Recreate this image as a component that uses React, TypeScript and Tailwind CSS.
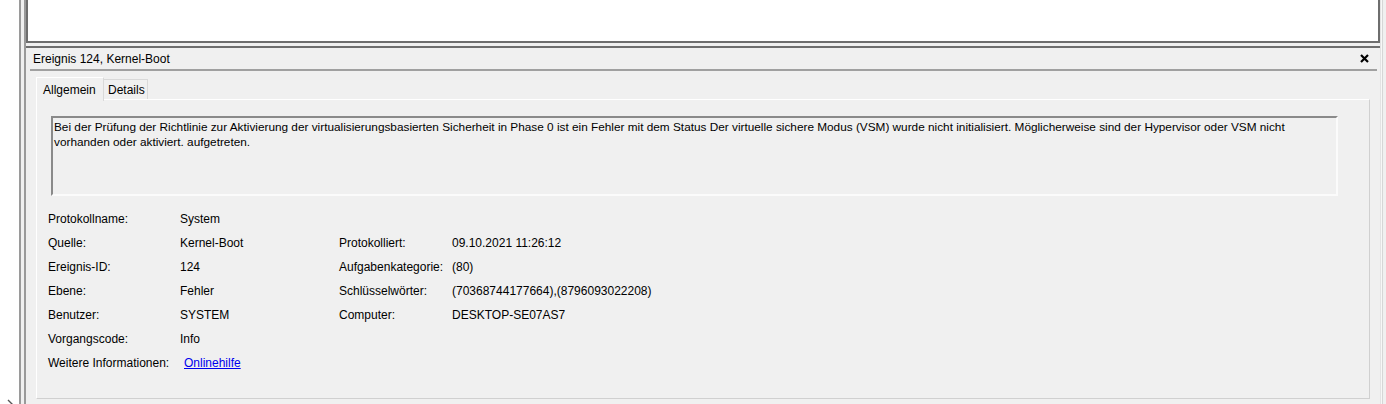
export default function App() {
  const rows: [string, React.ReactNode, string?, string?][] = [
    ["Protokollname:", "System"],
    ["Quelle:", "Kernel-Boot", "Protokolliert:", "09.10.2021 11:26:12"],
    ["Ereignis-ID:", "124", "Aufgabenkategorie:", "(80)"],
    ["Ebene:", "Fehler", "Schlüsselwörter:", "(70368744177664),(8796093022208)"],
    ["Benutzer:", "SYSTEM", "Computer:", "DESKTOP-SE07AS7"],
    ["Vorgangscode:", "Info"],
    [
      "Weitere Informationen:",
      <a href="#" className="ml-[4px] text-[#0000ee] underline">
        Onlinehilfe
      </a>,
    ],
  ]

  return (
    <div className="flex h-[404px] w-[1386px] overflow-hidden bg-[#f0f0f0] font-['Liberation_Sans',sans-serif] text-[12px] text-black">
      {/* left tree pane */}
      <div className="flex w-[19px] flex-col justify-end bg-white">
        <svg width="19" height="8" viewBox="0 0 19 8" className="mb-[-3px]">
          <path d="M8 1 L12 5 L8 9" fill="none" stroke="#555" strokeWidth="1.4" />
        </svg>
      </div>

      {/* splitter */}
      <div className="w-[7px] border-x-2 border-[#9a9a9a] bg-[#f0f0f0]" />

      {/* main column */}
      <div className="flex flex-1 flex-col">
        <div className="h-[43px] border-x-2 border-b-2 border-[#6e6e6e] bg-white" />
        <div className="h-[3px]" />
        <div className="flex flex-1 flex-col border-t-2 border-[#6e6e6e]">
          <div className="flex h-[21px] items-center justify-between pl-[7px] pr-[11px]">
            <span>Ereignis 124, Kernel-Boot</span>
            <svg width="9" height="9" viewBox="0 0 9 9">
              <path d="M1 1 L8 8 M8 1 L1 8" stroke="#000" strokeWidth="2.2" />
            </svg>
          </div>
          <div className="ml-[4px] mr-[3px] h-[2px] bg-[#a0a0a0]" />

          {/* tabs */}
          <div className="ml-[10px] mr-[10px] mt-[6px] flex flex-1 flex-col">
            <div className="flex items-end">
              <div className="relative z-10 mb-[-2px] flex h-[24px] w-[68px] items-start border-l border-r border-t border-l-white border-r-[#d9d9d9] border-t-white bg-[#f0f0f0] pl-[6px] pt-[3px]">
                Allgemein
              </div>
              <div className="flex h-[20px] w-[44px] items-start border-r border-t border-[#d9d9d9] bg-[#f0f0f0] pl-[4px] pt-[1px]">
                Details
              </div>
            </div>
            <div className="flex flex-1 flex-col border border-b-[#d0d0d0] border-l-white border-r-[#d0d0d0] border-t-white pl-[11px] pr-[31px] pt-[16px]">
              <div className="ml-[3px] h-[80px] border-2 border-b-[#fbfbfb] border-l-[#8a8a8a] border-r-[#fbfbfb] border-t-[#8a8a8a] px-[1px] pt-[2px] text-[11.8px] leading-[15px]">
                Bei der Prüfung der Richtlinie zur Aktivierung der virtualisierungsbasierten Sicherheit in Phase 0 ist ein
                Fehler mit dem Status Der virtuelle sichere Modus (VSM) wurde nicht initialisiert. Möglicherweise sind der
                Hypervisor oder VSM nicht
                <br />
                vorhanden oder aktiviert. aufgetreten.
              </div>
              <div className="mt-[11px] grid grid-cols-[132px_159px_113px_1fr]">
                {rows.map(([l, v, l2, v2], i) => (
                  <div key={i} className="contents">
                    <div className="flex h-[24px] items-center">{l}</div>
                    <div className="flex h-[24px] items-center">{v}</div>
                    <div className="flex h-[24px] items-center">{l2 ?? ""}</div>
                    <div className="flex h-[24px] items-center">{v2 ?? ""}</div>
                  </div>
                ))}
              </div>
            </div>
          </div>
          <div className="h-[5px]" />
        </div>
      </div>

      {/* right edge */}
      <div className="flex w-[6px]">
        <div className="w-[1px] bg-[#e3e3e3]" />
        <div className="w-[1px] bg-[#f7f7f7]" />
        <div className="w-[1px] bg-[#d6d6d6]" />
        <div className="flex-1 bg-[#f0f0f0]" />
      </div>
    </div>
  )
}
